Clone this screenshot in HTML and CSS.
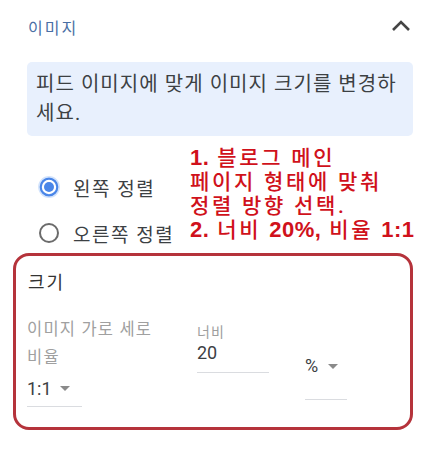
FILE: index.html
```html
<!DOCTYPE html>
<html lang="ko">
<head>
<meta charset="utf-8">
<link rel="stylesheet" href="styles.css">
</head>
<body>
<div class="panel">
  <div class="header">
    <span class="title">이미지</span>
    <svg class="chevron" width="20" height="14" viewBox="0 0 20 14"><path d="M2 11 L10 3 L18 11" fill="none" stroke="#454545" stroke-width="2.6"/></svg>
  </div>
  <div class="info">피드 이미지에 맞게 이미지 크기를 변경하세요.</div>
  <div class="align">
    <div class="radio-row">
      <svg class="radio" width="22" height="22" viewBox="0 0 22 22"><circle cx="11" cy="11" r="10.2" fill="none" stroke="#d2e3fc" stroke-width="1.4"/><circle cx="11" cy="11" r="8.3" fill="none" stroke="#4a86e8" stroke-width="2.2"/><circle cx="11" cy="11" r="5" fill="#4a86e8"/></svg>
      <span class="radio-label">왼쪽 정렬</span>
    </div>
    <div class="radio-row">
      <svg class="radio" width="22" height="22" viewBox="0 0 22 22"><circle cx="11" cy="11" r="9" fill="none" stroke="#6b6b6b" stroke-width="2"/></svg>
      <span class="radio-label">오른쪽 정렬</span>
    </div>
    <div class="note">
      <div><b>1.</b> 블로그 메인</div>
      <div>페이지 형태에 맞춰</div>
      <div>정렬 방향 선택.</div>
      <div><b>2.</b> 너비 <b>20%,</b> 비율 <b>1:1</b></div>
    </div>
  </div>
  <div class="size-box">
    <div class="size-title">크기</div>
    <div class="fields">
      <div class="field ratio">
        <div class="label">이미지 가로 세로 비율</div>
        <div class="select ratio-select"><span>1:1</span><span class="caret"></span></div>
      </div>
      <div class="field width">
        <div class="small-label">너비</div>
        <div class="input">20</div>
      </div>
      <div class="field unit">
        <div class="select unit-select"><span>%</span><span class="caret"></span></div>
      </div>
    </div>
  </div>
</div>
</body>
</html>
```
FILE: styles.css
```css
* { box-sizing: border-box; }
body {
  margin: 0;
  background: #ffffff;
  font-family: Roboto, "Noto Sans CJK KR", sans-serif;
  color: #3c4043;
}
.panel { width: 425px; }
.header {
  height: 54px;
  display: flex;
  align-items: center;
  justify-content: space-between;
  padding: 0 14px 0 28px;
}
.title {
  font-size: 16px;
  color: #4a6fa5;
  letter-spacing: 2px;
}
.chevron { margin-top: -2px; }
.info {
  margin: 8px 12px 0 27px;
  background: #e8f0fd;
  border-radius: 5px;
  padding: 8px 6px 8px 9px;
  font-size: 20px;
  line-height: 29px;
  color: #3c4043;
  letter-spacing: 1.05px;
  word-break: break-all;
}
.align {
  position: relative;
  padding-top: 28px;
}
.radio-row {
  height: 46px;
  display: flex;
  align-items: center;
  padding-left: 38px;
}
.radio { flex: none; }
.radio-label {
  margin-left: 13px;
  font-size: 19px;
  color: #3c4043;
  letter-spacing: 1.5px;
}
.note {
  position: absolute;
  left: 190px;
  top: 10px;
  color: #d0111b;
  font-size: 21px;
  line-height: 24px;
  font-weight: 500;
  letter-spacing: 2.7px;
  white-space: nowrap;
}
.note b {
  font-family: "Liberation Sans", sans-serif;
  font-weight: 700;
  letter-spacing: 0.5px;
  font-size: 22px;
}
.size-box {
  margin: -3px 0 0 13px;
  width: 400px;
  height: 177px;
  border: 3px solid #b5333b;
  border-radius: 16px;
  padding: 15px 0 0 12px;
}
.size-title {
  font-size: 18px;
  line-height: 24px;
  color: #333333;
  letter-spacing: 2px;
}
.fields {
  display: flex;
  align-items: flex-start;
  margin-top: 21px;
}
.field.ratio { width: 170px; margin-left: -1px; }
.label {
  width: 150px;
  font-size: 16.5px;
  line-height: 28px;
  color: #a0a0a0;
  letter-spacing: 1.2px;
  word-break: keep-all;
}
.select {
  display: flex;
  align-items: center;
  font-size: 18px;
  color: #3c4043;
  border-bottom: 1px solid #dadce0;
}
.ratio-select {
  width: 55px;
  height: 35px;
  padding-bottom: 2px;
}
.caret {
  width: 0;
  height: 0;
  border-left: 5px solid transparent;
  border-right: 5px solid transparent;
  border-top: 5px solid #8a8a8a;
  margin-left: 8px;
}
.field.width { width: 108px; margin-top: 7px; }
.small-label {
  font-size: 14px;
  line-height: 18px;
  color: #9e9e9e;
  letter-spacing: 1px;
}
.input {
  width: 72px;
  font-size: 18px;
  line-height: 24px;
  padding-bottom: 7px;
  border-bottom: 1px solid #dadce0;
}
.unit-select {
  width: 42px;
  margin-top: 38px;
  height: 46px;
  align-items: flex-start;
  padding-top: 1px;
}
.unit-select .caret { margin-top: 9px; margin-left: 10px; }
```
